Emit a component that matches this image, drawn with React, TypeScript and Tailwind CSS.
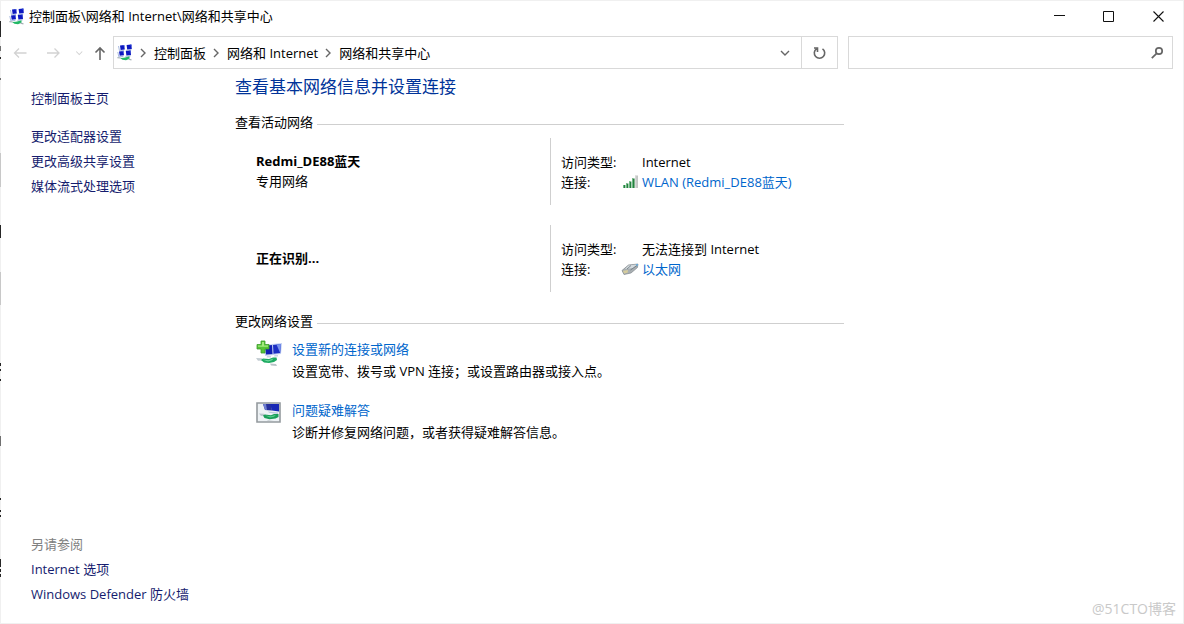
import React from "react";

const linkClass = "text-[#0066cc] hover:underline";
const sideLinkClass = "text-[#151c6e] hover:underline";

function NetworkIcon() {
  return (
    <svg width="16" height="17" viewBox="0 0 16 17" aria-hidden="true" className="shrink-0">
      <path d="M1.500 2 2.500 6.800l4.500-.4M9 6.400l5.400-.6M.8 8 1.800 12.800l4.600-.4M8.400 12.400l5.400-.6" fill="none" stroke="#a9bbe0" />
      <path d="M3 1.400 7.200 1l.6 4.400-4.200.5zM9.600.9l4.800-.5.4 4.500-4.600.5z" fill="#0c18c0" />
      <path d="M2 7.400l4.400-.4.6 4.300-4.300.5zM8.800 6.900l4.800-.5.4 4.500-4.600.5z" fill="#0c18c0" />
      <path d="M5.600 1.200 7.200 1l.3 2zM12.600.6l1.800-.2.2 2zM4.800 7.100l1.600-.1.300 2zM11.800 6.600l1.800-.2.2 2z" fill="#3f5be0" />
      <path d="M3 14l4-.2 2-.6 3.500-1v2.600l-3.500 1.400-3.500-.4z" fill="#22b866" />
      <path d="M.4 13.600l3.200.4M11.500 15.200l3 .6" stroke="#a6b0b6" strokeWidth="1.200" />
    </svg>
  );
}

function SignalIcon() {
  return (
    <svg width="16" height="14" viewBox="0 0 16 14" aria-hidden="true">
      <path d="M0 10h2.400v3H0zM3 8.500h2.400V13H3zM6 6.500h2.400V13H6zM9 3.500h2.600V13H9z" fill="#25803f" />
      <path d="M0 10h1v3H0zM3 8.500h1V13H3zM6 6.500h1V13H6zM9 3.500h1V13H9z" fill="#6cb982" />
      <path d="M12.200.5H15V13h-2.800z" fill="#c2c5c3" />
      <path d="M12.200.5h1V13h-1z" fill="#d9dbda" />
    </svg>
  );
}

function EthernetIcon() {
  return (
    <svg width="18" height="14" viewBox="0 0 18 14" aria-hidden="true">
      <path d="M1 8.500 7.500 3 17 2l-.6 3.600L10 11l-7 1.500z" fill="#a9afb2" stroke="#7f878c" strokeWidth=".7" />
      <path d="M7.500 3.500 16 2.500l-4 3.500-8 1z" fill="#d3dade" />
      <path d="M2 8.800l5-.8-.4 2.800-3.600.8z" fill="#d5cc9d" />
      <path d="M9.500 8 16 3.500M6 7l4-3.500" stroke="#68747c" strokeWidth=".8" />
      <path d="M14.500 2.300l2.500-.3-.6 2.600z" fill="#62aee0" />
    </svg>
  );
}

function NewConnectionIcon() {
  return (
    <svg width="26" height="28" viewBox="0 0 26 28" aria-hidden="true">
      <path d="M8 5l10-1v11l-9 1z" fill="#c5d2ec" />
      <path d="M9 5.500l8-.5v9l-7 .5z" fill="#101fb4" />
      <path d="M16 4l10-1-1 11-8.500 1z" fill="#c3d1f2" />
      <path d="M17 5l8-1-.8 9-6.700.8z" fill="#1d30c4" />
      <path d="M20.500 4.600l4.500-.6-.8 9z" fill="#7993ec" />
      <path d="M11 16h4v1.500h-4.500zM18.500 15H22v1.500h-4z" fill="#ccd6e5" />
      <path d="M0 18l6 .3 2 2.200-6 .3z" fill="#c3ccd2" />
      <path d="M14 23.500l6 .5 1 2-6-.5z" fill="#b9c2c8" />
      <path d="M5 20l2-1.500 6 .5 4-1.500h3.500l.5 2.500-3 2-5 1-5-.5z" fill="#1daa61" />
      <path d="M6.500 19.600l6 .6 5-1.800-1.500 1.800-4 1.200z" fill="#6fd79c" />
      <path d="M5 1h4v3.500h4V9H9v4H5V9H1V4.500h4z" fill="#55c437" stroke="#3d9c2c" strokeWidth=".8" />
      <path d="M6 2h2v3.500h4v1.300H2V5.500h4z" fill="#a3ea7e" />
    </svg>
  );
}

function TroubleshootIcon() {
  return (
    <svg width="25" height="22" viewBox="0 0 25 22" aria-hidden="true">
      <path d="M1 2h23v19H1z" fill="#eef2f5" stroke="#949a9e" strokeWidth="1.600" />
      <path d="M7 3h8l1 6.500-7-.5z" fill="#27309c" />
      <path d="M14 3h9v7.500l-7-1z" fill="#1727b5" />
      <path d="M7 3h3l1 6-2-.2z" fill="#6f7fd0" />
      <path d="M12 10.500l10 1V13l-9-1.200z" fill="#bdc9dc" />
      <path d="M3 12.500l5 .3 2 2-5 .2z" fill="#bcc6cc" />
      <path d="M7 14.500l2-1 6 .7 3-1.200h4.500v3l-3 1.500-6 .7-5-1.200z" fill="#199e58" />
      <path d="M9 14.500l6 .8 5-1.500-2 2-4 .8z" fill="#5ccb8c" />
      <path d="M11 19l7 .7h-6z" fill="#b9c2c8" />
    </svg>
  );
}

function Chevron({ down = false }: { down?: boolean }) {
  return (
    <svg width="10" height="10" viewBox="0 0 10 10" fill="none" stroke="currentColor" strokeWidth="1.400" aria-hidden="true">
      <path d={down ? "M1 3l4 4 4-4" : "M2 1l4 4-4 4"} />
    </svg>
  );
}

function Arrow({ path }: { path: string }) {
  return (
    <svg width="14" height="14" viewBox="0 0 14 14" fill="none" stroke="currentColor" strokeWidth="1.300" aria-hidden="true">
      <path d={path} />
    </svg>
  );
}

/* Sliver of the window that lies behind this one */
function BackdropSliver() {
  return (
    <svg width="1" height="624" className="absolute -left-px -top-px" aria-hidden="true">
      <path d="M0 0h1v624H0z" fill="#f0f0f0" />
      <path d="M0 21h1v16H0zM0 57h1v2H0zM0 225h1v13H0zM0 363h1v3H0zM0 369h1v2H0zM0 379h1v2H0zM0 498h1v2H0zM0 510h1v2H0zM0 515h1v2H0zM0 559h1v8H0zM0 569h1v3H0zM0 574h1v3H0z" fill="#262626" />
      <path d="M0 46h1v5H0zM0 78h1v2H0zM0 436h1v10H0z" fill="#707070" />
      <path d="M0 153h1v34H0zM0 272h1v33H0z" fill="#c8c8c8" />
    </svg>
  );
}

function TitleBar() {
  return (
    <header className="flex h-[35px] items-start pl-2">
      <div className="flex h-[30px] flex-1 items-center gap-1">
        <NetworkIcon />
        <h1>控制面板\网络和 Internet\网络和共享中心</h1>
      </div>
      <button aria-label="最小化" className="flex h-[30px] w-12 items-center justify-center">
        <svg width="11" height="11" stroke="#111" aria-hidden="true"><path d="M0 4.500h11" /></svg>
      </button>
      <button aria-label="最大化" className="flex h-[30px] w-[50px] items-center justify-center">
        <svg width="11" height="11" fill="none" stroke="#111" aria-hidden="true"><path d="M.5.5h10v10H.5z" /></svg>
      </button>
      <button aria-label="关闭" className="flex h-[30px] w-[50px] items-center justify-center">
        <svg width="11" height="11" fill="none" stroke="#111" strokeWidth="1.100" aria-hidden="true"><path d="M.5.500l10 10M10.500.5l-10 10" /></svg>
      </button>
    </header>
  );
}

function AddressRow() {
  return (
    <div className="flex pr-2.5">
      <nav aria-label="导航" className="flex w-28 shrink-0 items-center pl-3 text-[#d2d2d2]">
        <button aria-label="后退" className="w-[33px]"><Arrow path="M13.500 7H1.500M6 2.500 1.500 7 6 11.500" /></button>
        <button aria-label="前进" className="w-[27px]"><Arrow path="M1 7h12M8.500 2.500 13 7 8.500 11.500" /></button>
        <button aria-label="最近浏览的位置" className="w-5 scale-75"><Chevron down /></button>
        <button aria-label="上移" className="text-[#666]">
          <svg width="14" height="14" viewBox="0 0 14 14" fill="none" stroke="currentColor" strokeWidth="1.600" aria-hidden="true">
            <path d="M7 14V2M2.500 6.500 7 2l4.500 4.500" />
          </svg>
        </button>
      </nav>
      <div className="flex h-[33px] min-w-0 flex-[722] items-center border border-[#d9d9d9] text-[#666]">
        <span className="pl-[3px]"><NetworkIcon /></span>
        <span className="flex w-[21px] justify-center"><Chevron /></span>
        <button className="text-black">控制面板</button>
        <span className="flex w-[21px] justify-center"><Chevron /></span>
        <button className="text-black">网络和 Internet</button>
        <span className="flex w-[21px] justify-center"><Chevron /></span>
        <button className="text-black">网络和共享中心</button>
        <button aria-label="以前的位置" className="ml-auto flex h-full w-8 items-center justify-center"><Chevron down /></button>
        <button aria-label="刷新" className="flex h-full w-9 items-center justify-center border-l border-[#d9d9d9]">
          <svg width="14" height="14" viewBox="0 0 14 14" fill="none" stroke="currentColor" strokeWidth="1.600" aria-hidden="true">
            <path d="M10.500 2.800A5.200 5.200 0 1 1 4.500 2.800M2 2h3.500v4" />
          </svg>
        </button>
      </div>
      <label className="ml-2.5 flex h-[33px] min-w-0 flex-[323] items-center border border-[#d9d9d9] text-[#666]">
        <input aria-label="搜索控制面板" className="h-full min-w-0 flex-1 px-2 text-black outline-none" />
        <svg width="14" height="14" viewBox="0 0 14 14" fill="none" stroke="currentColor" strokeWidth="1.700" aria-hidden="true" className="mr-2">
          <circle cx="9" cy="5" r="3.200" />
          <path d="M6.700 7.300 1.800 12.200" />
        </svg>
      </label>
    </div>
  );
}

function SectionTitle({ children }: { children: React.ReactNode }) {
  return (
    <div className="flex items-center gap-1 leading-5">
      <h3>{children}</h3>
      <div className="mt-1 h-px flex-1 bg-[#cfcfcf]" />
    </div>
  );
}

type NetworkProps = { name: string; kind?: string; access: string; icon: React.ReactNode; link: string };

function Network({ name, kind, access, icon, link }: NetworkProps) {
  return (
    <section className="flex leading-5">
      <div className="flex w-[315px] flex-col justify-center pb-0.5 pl-[21px]">
        <h4 className="font-bold">{name}</h4>
        {kind && <p>{kind}</p>}
      </div>
      <dl className="grid flex-1 grid-cols-[81px_auto] justify-start border-l border-[#cfcfcf] pb-[13px] pl-2.5 pt-3.5">
        <dt>访问类型:</dt>
        <dd>{access}</dd>
        <dt className="flex items-center justify-between pr-[3px]">连接:{icon}</dt>
        <dd><a href="#connection" className={linkClass}>{link}</a></dd>
      </dl>
    </section>
  );
}

function Task({ icon, title, text }: { icon: React.ReactNode; title: string; text: string }) {
  return (
    <div className="flex pl-[21px] leading-5">
      <div className="w-9 pt-px">{icon}</div>
      <div className="flex flex-col gap-0.5">
        <a href="#task" className={linkClass}>{title}</a>
        <p>{text}</p>
      </div>
    </div>
  );
}

export default function App() {
  return (
    <div className="relative flex min-h-screen flex-col border border-[#f0f0f0] bg-white font-['Open_Sans','Noto_Sans_CJK_SC',sans-serif] text-[13px] leading-5 text-black">
      <BackdropSliver />
      <TitleBar />
      <AddressRow />
      <div className="flex flex-1">
        <aside className="flex w-[234px] shrink-0 flex-col pb-[19px] pl-7.5 pt-[19px]">
          <a href="#home" className={sideLinkClass}>控制面板主页</a>
          <nav className="mt-4.5 flex flex-col gap-[5px]">
            <a href="#adapter" className={sideLinkClass}>更改适配器设置</a>
            <a href="#sharing" className={sideLinkClass}>更改高级共享设置</a>
            <a href="#media" className={sideLinkClass}>媒体流式处理选项</a>
          </nav>
          <nav className="mt-auto flex flex-col gap-[5px]">
            <h2 className="text-[#808080]">另请参阅</h2>
            <a href="#internet" className={sideLinkClass}>Internet 选项</a>
            <a href="#firewall" className={sideLinkClass}>Windows Defender 防火墙</a>
          </nav>
        </aside>
        <main className="max-w-[609px] flex-1 pt-1.5">
          <h2 className="text-[17px] leading-6 text-[#003399]">查看基本网络信息并设置连接</h2>
          <div className="mt-[13px]">
            <SectionTitle>查看活动网络</SectionTitle>
          </div>
          <div className="mt-1.5 flex flex-col gap-5">
            <Network name="Redmi_DE88蓝天" kind="专用网络" access="Internet" icon={<SignalIcon />} link="WLAN (Redmi_DE88蓝天)" />
            <Network name="正在识别..." access="无法连接到 Internet" icon={<EthernetIcon />} link="以太网" />
          </div>
          <div className="mt-[19px]">
            <SectionTitle>更改网络设置</SectionTitle>
          </div>
          <div className="mt-2 flex flex-col gap-[19px]">
            <Task icon={<NewConnectionIcon />} title="设置新的连接或网络" text="设置宽带、拨号或 VPN 连接；或设置路由器或接入点。" />
            <Task icon={<TroubleshootIcon />} title="问题疑难解答" text="诊断并修复网络问题，或者获得疑难解答信息。" />
          </div>
        </main>
      </div>
      <p className="absolute bottom-1 right-[7px] text-[14px] text-[#c9c9c9]">@51CTO博客</p>
    </div>
  );
}
